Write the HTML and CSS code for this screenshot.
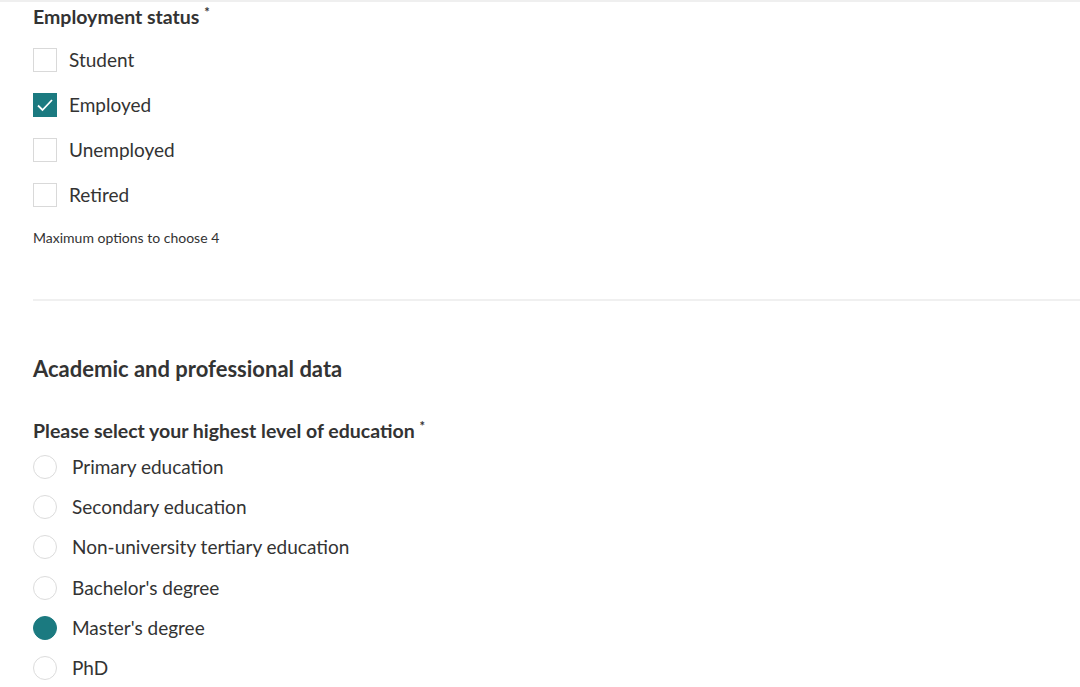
FILE: index.html
```html
<!DOCTYPE html>
<html>
<head>
  <title>Formulario</title>
  <link rel="stylesheet" href="styles.css">
</head>
<body>
  <div class="form">
    <div class="campo primeiro">
      <div class="pergunta">Employment status <span class="req">*</span></div>
      <div class="opcoes-check">
        <label class="opcao"><span class="caixa"></span>Student</label>
        <label class="opcao"><span class="caixa marcada">
          <svg width="18" height="14" viewBox="0 0 18 14"><path d="M2 7.5 L6.5 12 L16 2" fill="none" stroke="#fff" stroke-width="1.8"/></svg>
        </span>Employed</label>
        <label class="opcao"><span class="caixa"></span>Unemployed</label>
        <label class="opcao"><span class="caixa"></span>Retired</label>
      </div>
      <p class="ajuda">Maximum options to choose 4</p>
    </div>

    <div class="secao">
      <h2>Academic and professional data</h2>
      <div class="campo">
        <div class="pergunta">Please select your highest level of education <span class="req">*</span></div>
        <div class="opcoes-radio">
          <label class="opcao"><span class="bola"></span>Primary education</label>
          <label class="opcao"><span class="bola"></span>Secondary education</label>
          <label class="opcao"><span class="bola"></span>Non-university tertiary education</label>
          <label class="opcao"><span class="bola"></span>Bachelor's degree</label>
          <label class="opcao"><span class="bola marcada"></span>Master's degree</label>
          <label class="opcao"><span class="bola"></span>PhD</label>
        </div>
      </div>
    </div>
  </div>
</body>
</html>
```

FILE: styles.css
```css
body {
  font-family: Lato, "Open Sans", sans-serif;
  color: #333;
  margin: 0;
  padding: 0;
  background: #fff;
  border-top: 2px solid #efefef;
}

.form {
  padding-left: 33px;
}

.pergunta {
  font-size: 19.5px;
  font-weight: bold;
  line-height: 24px;
}

.req {
  font-size: 13px;
  vertical-align: top;
  position: relative;
  top: -5px;
}

.primeiro .pergunta {
  margin-top: 3px;
}

.opcoes-check {
  display: flex;
  flex-direction: column;
  gap: 21px;
  margin-top: 19px;
}

.opcao {
  display: flex;
  align-items: center;
  font-size: 19px;
  line-height: 24px;
}

.caixa {
  width: 24px;
  height: 24px;
  box-sizing: border-box;
  border: 1px solid #d9d9d9;
  margin-right: 12px;
  display: flex;
  align-items: center;
  justify-content: center;
}

.caixa.marcada {
  background: #1b7a80;
  border-color: #1b7a80;
}

.ajuda {
  font-size: 14px;
  margin: 23px 0 0;
  line-height: 16px;
}

.secao {
  margin-top: 53px;
  border-top: 2px solid #f0f0f0;
}

h2 {
  font-size: 22px;
  font-weight: bold;
  margin: 54px 0 0;
  line-height: 28px;
}

.secao .pergunta {
  margin-top: 36px;
}

.opcoes-radio {
  display: flex;
  flex-direction: column;
  gap: 16.2px;
  margin-top: 12px;
}

.bola {
  width: 24px;
  height: 24px;
  box-sizing: border-box;
  border: 1px solid #dcdcdc;
  border-radius: 50%;
  margin-right: 15px;
}

.bola.marcada {
  background: #1b7a80;
  border-color: #1b7a80;
}
```
